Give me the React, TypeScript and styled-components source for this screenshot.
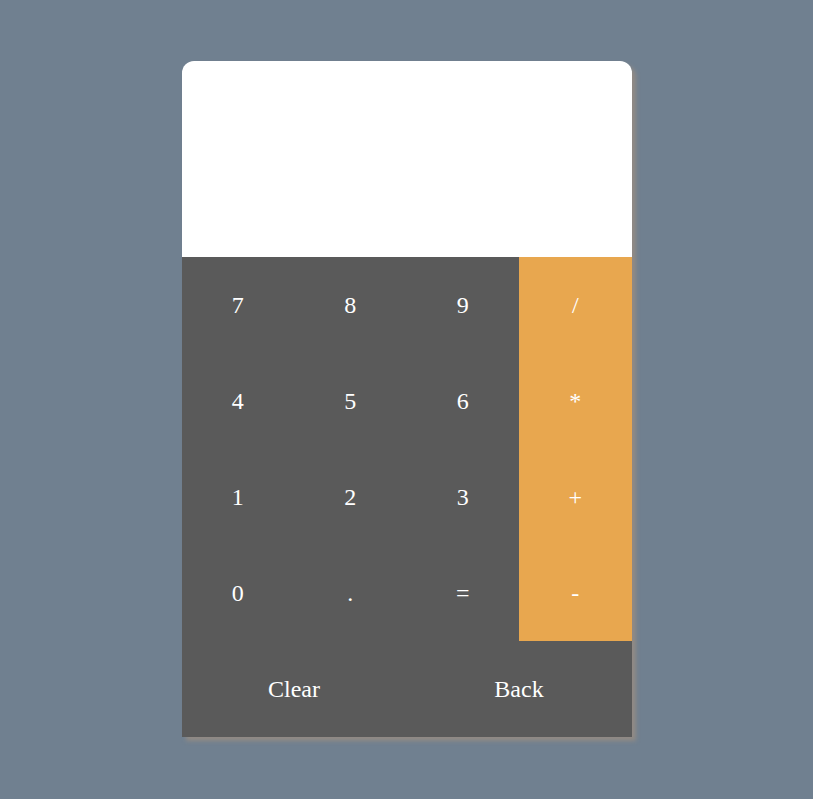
import React from "react";
import styled, { createGlobalStyle } from "styled-components";

const Global = createGlobalStyle`
  html, body { margin: 0; padding: 0; }
  body {
    background: #708090;
    font-family: "Liberation Serif", "Times New Roman", serif;
    min-height: 100vh;
  }
`;

const Page = styled.div`
  display: flex;
  justify-content: center;
  padding-top: 61px;
`;

const Calculator = styled.div`
  width: 450px;
  border-radius: 12px 12px 0 0;
  box-shadow: 4px 4px 4px rgba(150, 140, 130, 0.85);
  overflow: hidden;
`;

const Display = styled.div`
  height: 196px;
  background: #ffffff;
`;

const Keys = styled.div`
  display: grid;
  grid-template-columns: repeat(4, 1fr);
  grid-auto-rows: 96px;
`;

const Key = styled.button<{ $op?: boolean; $wide?: boolean }>`
  grid-column: ${(p) => (p.$wide ? "span 2" : "span 1")};
  border: none;
  margin: 0;
  padding: 0;
  background: ${(p) => (p.$op ? "#e8a74f" : "#5a5a5a")};
  color: #ffffff;
  font-family: "Liberation Serif", "Times New Roman", serif;
  font-size: 24px;
  display: flex;
  align-items: center;
  justify-content: center;
  cursor: pointer;
`;

const rows: string[][] = [
  ["7", "8", "9", "/"],
  ["4", "5", "6", "*"],
  ["1", "2", "3", "+"],
  ["0", ".", "=", "-"],
];

export default function App() {
  return (
    <>
      <Global />
      <Page>
        <Calculator>
          <Display />
          <Keys>
            {rows.map((row) =>
              row.map((k, i) => (
                <Key key={k} $op={i === 3}>
                  {k}
                </Key>
              ))
            )}
            <Key $wide>Clear</Key>
            <Key $wide>Back</Key>
          </Keys>
        </Calculator>
      </Page>
    </>
  );
}
